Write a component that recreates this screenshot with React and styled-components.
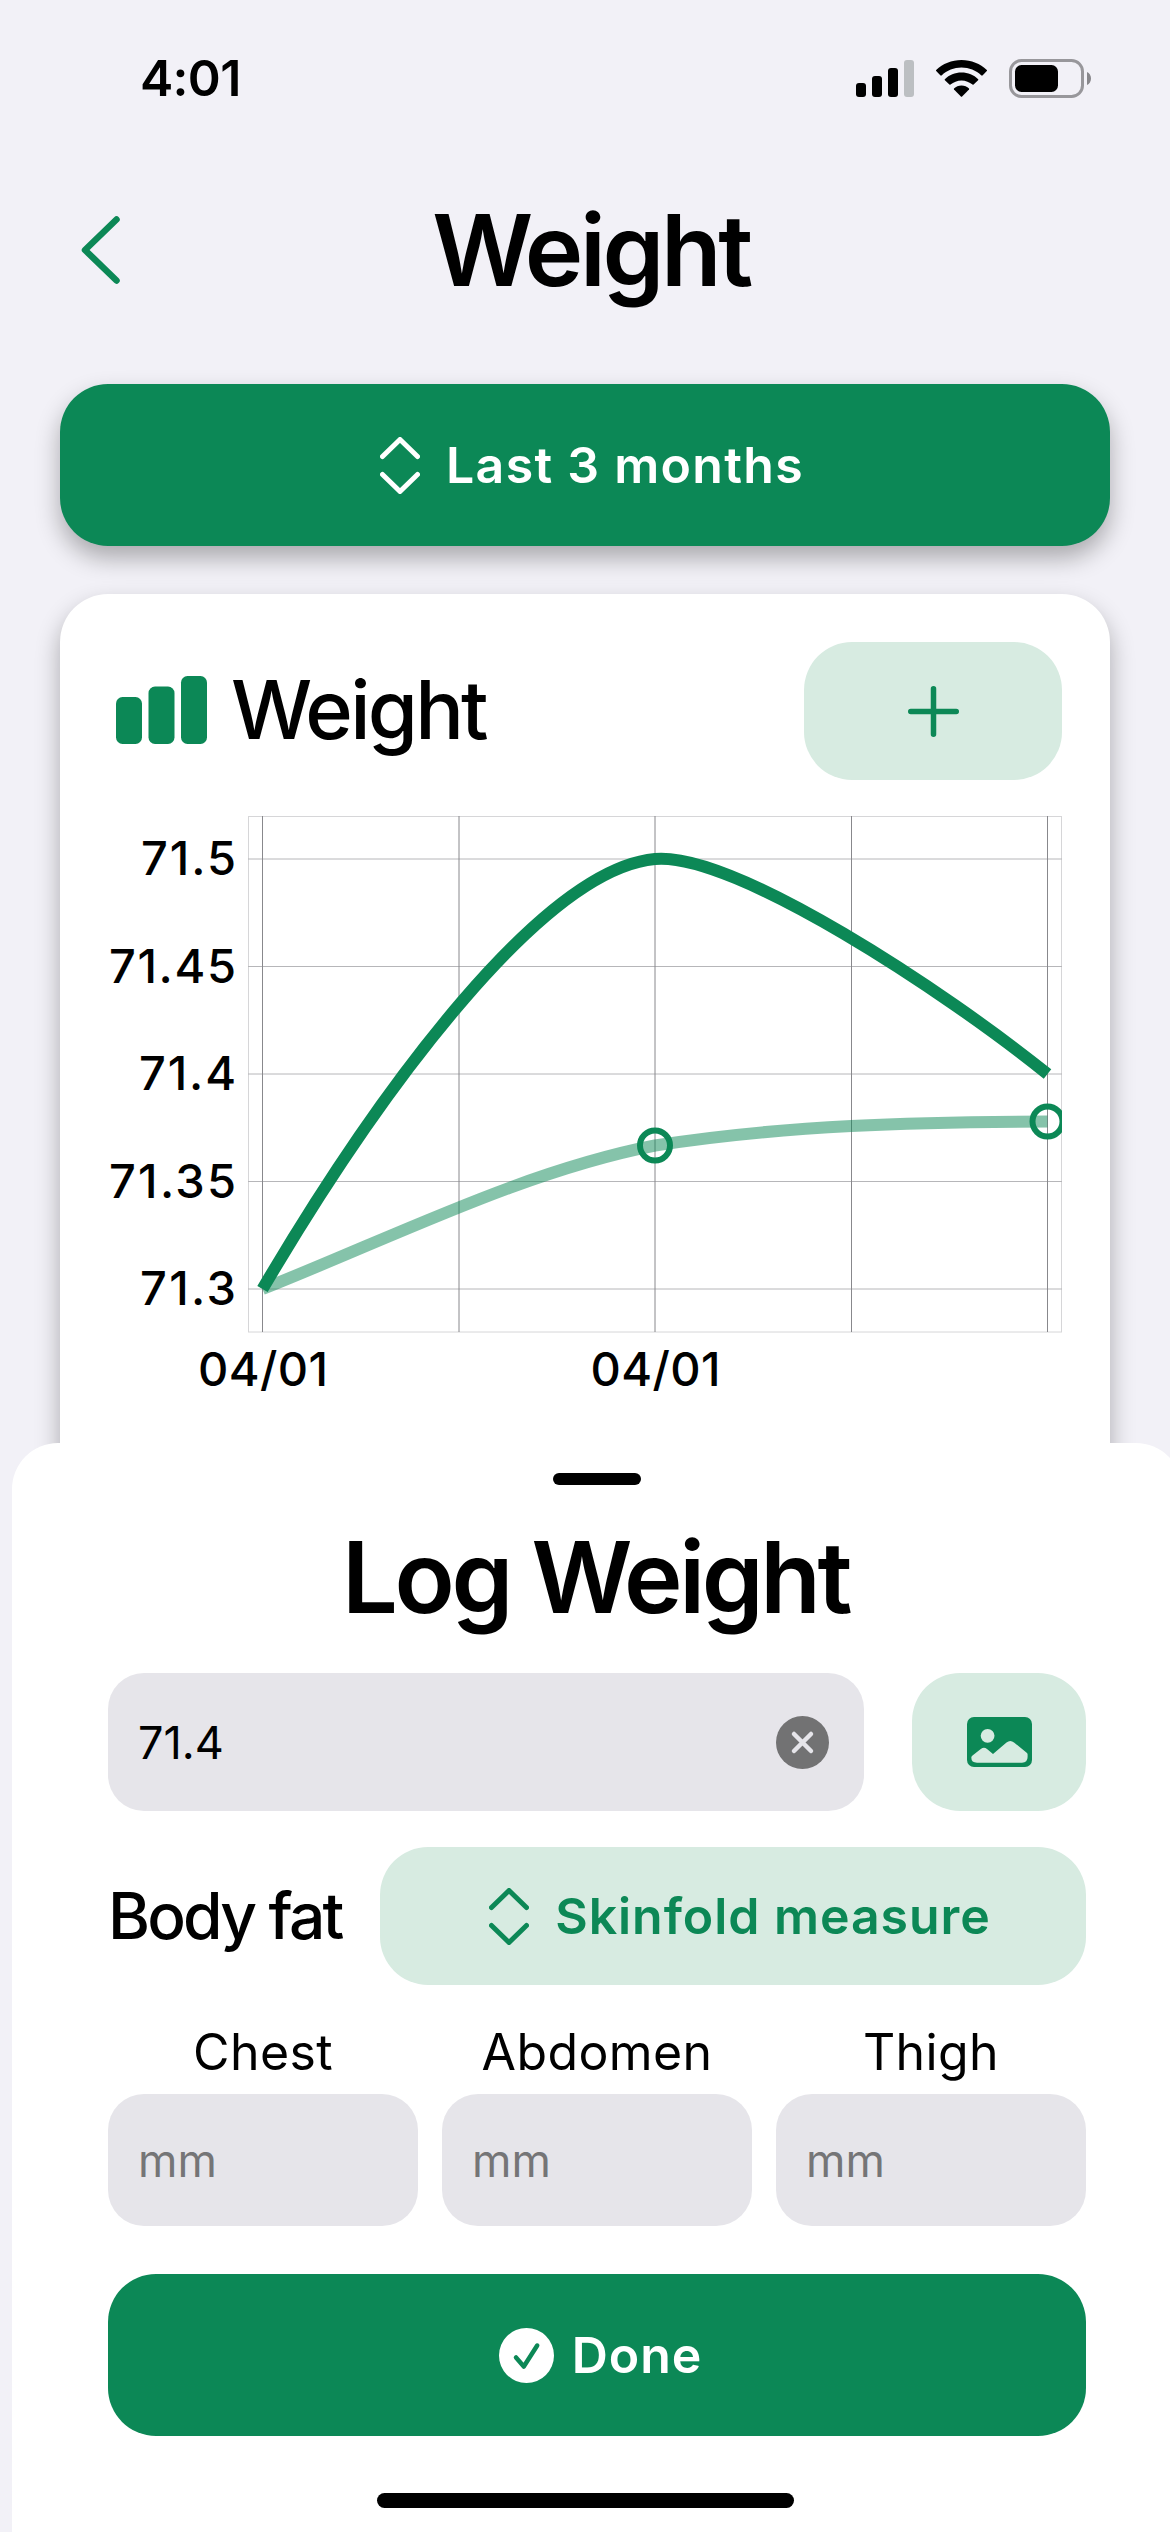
// src/App.jsx
import React, { useState } from "react";
import styled, { createGlobalStyle } from "styled-components";

const colors = {
  primary: "#0c8856",
  tint: "#d7ebe1",
  background: "#f2f1f7",
  card: "#ffffff",
  field: "#e6e5ea",
  placeholder: "#757577",
  clear: "#727273",
  text: "#000000",
};

const GlobalStyle = createGlobalStyle`
  * {
    box-sizing: border-box;
  }

  body {
    margin: 0;
    background: ${colors.background};
    font-family: Inter, "Liberation Sans", sans-serif;
    color: ${colors.text};
  }

  button, input {
    font-family: inherit;
    border: none;
    outline: none;
    margin: 0;
  }

  svg {
    display: block;
    flex-shrink: 0;
  }
`;

const Screen = styled.div`
  position: relative;
  width: 1170px;
  height: 2532px;
  overflow: hidden;
  background: ${colors.background};
`;

const StatusBar = styled.div`
  height: 156px;
  padding: 0 79px 0 140px;
  display: flex;
  align-items: center;
  justify-content: space-between;
`;

const Time = styled.span`
  font-size: 50px;
  font-weight: 600;
  letter-spacing: -0.7px;
`;

const StatusIcons = styled.div`
  display: flex;
  align-items: center;
  gap: 22px;
`;

const Header = styled.header`
  height: 190px;
  padding: 0 69px 2px 81px;
  display: grid;
  grid-template-columns: 1fr auto 1fr;
  align-items: center;
`;

const BackButton = styled.button`
  justify-self: start;
  padding: 0;
  background: none;
`;

const Title = styled.h1`
  margin: 0;
  font-size: 99px;
  line-height: 120px;
  font-weight: 600;
  letter-spacing: -3.4px;
  text-align: center;
`;

const SheetTitle = styled(Title).attrs({ as: "h2" })`
  padding-right: 3px;
`;

const Content = styled.main`
  padding: 38px 60px 0;
  display: flex;
  flex-direction: column;
  gap: 48px;
`;

const Button = styled.button`
  height: ${(p) => (p.$tinted ? 138 : 162)}px;
  width: ${(p) => p.$width || "auto"};
  flex: ${(p) => (p.$grow ? 1 : "none")};
  padding: 0 0 0 ${(p) => p.$indent || 0}px;
  display: flex;
  align-items: center;
  justify-content: center;
  gap: ${(p) => p.$gap || 0}px;
  border-radius: 48px;
  background: ${(p) => (p.$tinted ? colors.tint : colors.primary)};
  color: ${(p) => (p.$tinted ? colors.primary : "#fff")};
  font-size: 50px;
  font-weight: 570;
  letter-spacing: ${(p) => p.$spacing || 0}px;
  white-space: nowrap;
  box-shadow: ${(p) => (p.$raised ? "0 12px 24px rgba(0, 0, 0, 0.3)" : "none")};
`;

const Card = styled.section`
  height: 900px;
  padding: 48px;
  border-radius: 48px;
  background: ${colors.card};
  box-shadow: 0 12px 24px rgba(0, 0, 0, 0.3);
`;

const CardHeader = styled.div`
  display: flex;
  align-items: center;
  justify-content: space-between;
  margin-bottom: 36px;
`;

const CardTitle = styled.h2`
  margin: 0;
  padding: 0 0 2px 8px;
  display: flex;
  align-items: center;
  gap: 24px;
  font-size: 81px;
  font-weight: 500;
  letter-spacing: -2.8px;
`;

// 카드 위에 올라오는 입력 시트
const Sheet = styled.section`
  position: absolute;
  left: 12px;
  bottom: 0;
  width: 1170px;
  height: 1089px;
  padding: 30px 96px 0;
  border-radius: 46px 46px 0 0;
  background: ${colors.card};
  display: flex;
  flex-direction: column;
`;

const Handle = styled.div`
  align-self: center;
  width: 88px;
  height: 12px;
  margin-bottom: 32px;
  border-radius: 6px;
  background: ${colors.text};
`;

const Row = styled.div`
  display: flex;
  align-items: center;
  gap: ${(p) => p.$gap}px;
  margin-top: 36px;
`;

const Field = styled.div`
  flex: 1;
  min-width: 0;
  height: ${(p) => p.$height || 132}px;
  padding: 0 35px 0 30px;
  display: flex;
  align-items: center;
  border-radius: 36px;
  background: ${colors.field};
`;

const Input = styled.input`
  flex: 1;
  width: 100%;
  min-width: 0;
  padding: 0;
  background: transparent;
  color: ${colors.text};
  font-size: 45px;

  &::placeholder {
    color: ${colors.placeholder};
    opacity: 1;
  }
`;

const ClearButton = styled.button`
  padding: 0;
  background: none;
`;

const RowLabel = styled.span`
  width: 234px;
  font-size: 64px;
  line-height: 80px;
  font-weight: 550;
  letter-spacing: -2.8px;
  white-space: nowrap;
`;

const Measures = styled.div`
  display: grid;
  grid-template-columns: repeat(3, minmax(0, 1fr));
  gap: 24px;
  margin: 37px 0 48px;
`;

const Measure = styled.label`
  display: flex;
  flex-direction: column;
  gap: 12px;
  font-size: 50px;
  line-height: 60px;
  letter-spacing: 0.4px;
  text-align: center;

  ${Field} {
    flex: none;
  }
`;

const HomeIndicator = styled.div`
  position: absolute;
  left: 377px;
  bottom: 24px;
  width: 417px;
  height: 15px;
  border-radius: 8px;
  background: ${colors.text};
`;

const AxisLabel = styled.text`
  font-family: Inter, "Liberation Sans", sans-serif;
  font-size: 47px;
  font-weight: 460;
  fill: ${colors.text};
`;

function SignalIcon() {
  return (
    <svg width="58" height="37" viewBox="0 0 58 37">
      <rect x="0" y="23" width="10" height="14" rx="3" />
      <rect x="16" y="16" width="10" height="21" rx="3" />
      <rect x="32" y="8" width="10" height="29" rx="3" />
      <rect x="48" y="0" width="10" height="37" rx="3" fill="#bcbfc2" />
    </svg>
  );
}

function WifiIcon() {
  return (
    <svg width="51" height="37" viewBox="0 0 51 37">
      <path d="M25.5 0C35.3 0 44.3 3.8 50.8 10Q51.3 10.5 50.8 11L46.5 15.4Q46 15.8 45.4 15.4C40 10.5 33 7.6 25.5 7.6C18 7.6 11 10.5 5.6 15.4Q5 15.8 4.5 15.4L.2 11Q-.3 10.5.2 10C6.7 3.8 15.7 0 25.5 0Z" />
      <path d="M25.5 12.6C32 12.6 37.8 15.1 42.2 19.2Q42.6 19.7 42.1 20.2L37.6 24.6Q37 25 36.5 24.6C33.5 22 29.7 20.4 25.5 20.4C21.3 20.4 17.5 22 14.5 24.6Q14 25 13.4 24.6L8.9 20.2Q8.4 19.7 8.8 19.2C13.2 15.1 19 12.6 25.5 12.6Z" />
      <path d="M25.5 25.5C28.5 25.5 31 26.5 33 28.4Q33.4 28.9 33 29.4L26.1 36.4Q25.5 36.9 24.9 36.4L18 29.4Q17.6 28.9 18 28.4C20 26.5 22.5 25.5 25.5 25.5Z" />
    </svg>
  );
}

function BatteryIcon() {
  return (
    <svg width="82" height="39" viewBox="0 0 82 39">
      <rect x="1.5" y="1.5" width="72" height="36" rx="11" fill="none" stroke="#98979b" strokeWidth="3" />
      <rect x="6" y="6" width="43" height="27" rx="6.5" />
      <path d="M78 13C80.5 14 82 16.6 82 19.5S80.5 25 78 26Z" fill="#88878b" />
    </svg>
  );
}

function UpDownIcon() {
  return (
    <svg width="40" height="57" viewBox="0 0 40 57" fill="none" stroke="currentColor" strokeWidth="5" strokeLinecap="round" strokeLinejoin="round">
      <path d="M2.5 19.5L20 2.5L37.5 19.5" />
      <path d="M2.5 37.5L20 54.5L37.5 37.5" />
    </svg>
  );
}

function ImageIcon() {
  return (
    <svg width="65" height="50" viewBox="0 0 65 50">
      <rect width="65" height="50" rx="7" fill={colors.primary} />
      <circle cx="20.6" cy="18.8" r="6.9" fill={colors.tint} />
      <path
        fill={colors.tint}
        d="M4.3 40.5Q4.3 39.5 5.5 38.5L13.8 32Q17 29.7 20 32L26 37L39.5 25.5Q43.3 22.5 47 25.5L60 36Q60.6 36.6 60.6 37.5V40Q60.6 45.7 55 45.7H10Q4.3 45.7 4.3 40.5Z"
      />
    </svg>
  );
}

const yTicks = [
  { label: "71.5", y: 43, width: 95 },
  { label: "71.45", y: 150.5, width: 127 },
  { label: "71.4", y: 258, width: 97 },
  { label: "71.35", y: 365.5, width: 127 },
  { label: "71.3", y: 473, width: 96 },
];

const xTicks = [
  { label: "04/01", x: 154.5 },
  { x: 351 },
  { label: "04/01", x: 547 },
  { x: 743.5 },
  { x: 939.5 },
];

function WeightChart() {
  return (
    <svg width="954" height="584" viewBox="0 0 954 584">
      <defs>
        <clipPath id="plot">
          <rect x="140" y="0" width="814" height="517" />
        </clipPath>
      </defs>

      <rect x="140.5" y="0.5" width="813" height="515.5" fill="none" stroke="#d6d6d8" />
      {yTicks.map((t) => (
        <line key={t.label} x1="140" x2="954" y1={t.y} y2={t.y} stroke="#b6b6b9" />
      ))}
      {xTicks.map((t) => (
        <line key={t.x} x1={t.x} x2={t.x} y1="0" y2="516" stroke="#88888c" />
      ))}

      <g clipPath="url(#plot)" fill="none" stroke={colors.primary}>
        <path
          d="M154.5 473C285.5 421 416 355 547 329.5C678 309 808.5 306 939.5 305.5"
          strokeWidth="12"
          opacity="0.5"
        />
        <path
          d="M154.5 473C277 265 437 53 547 43C627 36 839 177 939.5 258"
          strokeWidth="12"
        />
        <circle cx="547" cy="329.5" r="15" strokeWidth="6" />
        <circle cx="939.5" cy="305.5" r="15" strokeWidth="6" />
      </g>

      {yTicks.map((t) => (
        <AxisLabel key={t.label} x="128" y={t.y + 16} textAnchor="end" textLength={t.width}>
          {t.label}
        </AxisLabel>
      ))}
      {xTicks.filter((t) => t.label).map((t) => (
        <AxisLabel key={t.x} x={t.x + 0.5} y="570" textAnchor="middle" textLength="130">
          {t.label}
        </AxisLabel>
      ))}
    </svg>
  );
}

export default function App() {
  const [weight, setWeight] = useState("71.4");

  return (
    <Screen>
      <GlobalStyle />
      <StatusBar>
        <Time>4:01</Time>
        <StatusIcons>
          <SignalIcon />
          <WifiIcon />
          <BatteryIcon />
        </StatusIcons>
      </StatusBar>

      <Header>
        <BackButton aria-label="Back">
          <svg width="39" height="68" viewBox="0 0 39 68" fill="none" stroke={colors.primary} strokeWidth="6.5" strokeLinecap="round" strokeLinejoin="round">
            <path d="M35.5 3.5L4 34L35.5 64.5" />
          </svg>
        </BackButton>
        <Title>Weight</Title>
      </Header>

      <Content>
        <Button $raised $gap={26} $spacing={1.3} $indent={14}>
          <UpDownIcon />
          Last 3 months
        </Button>

        <Card>
          <CardHeader>
            <CardTitle>
              <svg width="91" height="68" viewBox="0 0 91 68" fill={colors.primary}>
                <rect x="0" y="21" width="26" height="47" rx="6.5" />
                <rect x="32.5" y="10.5" width="26" height="57.5" rx="6.5" />
                <rect x="65" y="0" width="26" height="68" rx="6.5" />
              </svg>
              Weight
            </CardTitle>
            <Button $tinted $width="258px" aria-label="Add">
              <svg width="51" height="51" viewBox="0 0 51 51" stroke={colors.primary} strokeWidth="5.5" strokeLinecap="round">
                <path d="M25.5 2.75V48.25M2.75 25.5H48.25" />
              </svg>
            </Button>
          </CardHeader>
          <WeightChart />
        </Card>
      </Content>

      <Sheet>
        <Handle />
        <SheetTitle>Log Weight</SheetTitle>

        <Row $gap={48}>
          <Field $height={138}>
            <Input value={weight} onChange={(e) => setWeight(e.target.value)} />
            <ClearButton aria-label="Clear" onClick={() => setWeight("")}>
              <svg width="53" height="53" viewBox="0 0 53 53">
                <circle cx="26.5" cy="26.5" r="26.5" fill={colors.clear} />
                <path d="M18 18L35 35M35 18L18 35" stroke={colors.field} strokeWidth="4.5" strokeLinecap="round" />
              </svg>
            </ClearButton>
          </Field>
          <Button $tinted $width="174px" aria-label="Photo">
            <ImageIcon />
          </Button>
        </Row>

        <Row $gap={38}>
          <RowLabel>Body fat</RowLabel>
          <Button $tinted $grow $gap={26} $spacing={0.95} $indent={14}>
            <UpDownIcon />
            Skinfold measure
          </Button>
        </Row>

        <Measures>
          {["Chest", "Abdomen", "Thigh"].map((name) => (
            <Measure key={name}>
              {name}
              <Field>
                <Input placeholder="mm" />
              </Field>
            </Measure>
          ))}
        </Measures>

        <Button $gap={18} $spacing={1} $indent={7}>
          <svg width="55" height="55" viewBox="0 0 55 55">
            <circle cx="27.5" cy="27.5" r="27.5" fill="#fff" />
            <path d="M17 29.5L24.8 38.5L38.2 17.5" fill="none" stroke={colors.primary} strokeWidth="4.5" strokeLinecap="round" strokeLinejoin="round" />
          </svg>
          Done
        </Button>
      </Sheet>

      <HomeIndicator />
    </Screen>
  );
}
